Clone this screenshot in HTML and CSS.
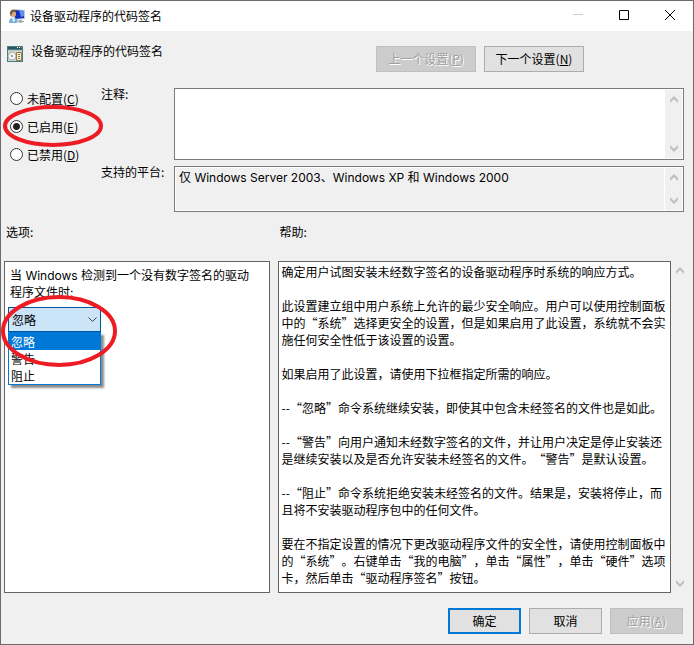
FILE: index.html
```
<!DOCTYPE html>
<html lang="zh-CN">

<head>
	<meta charset="utf-8">
	<title>设备驱动程序的代码签名</title>
	<link rel="stylesheet" href="styles.css">
</head>

<body>
	<svg class="defs" aria-hidden="true">
		<symbol id="up" viewBox="0 0 8 7"><path d="M0 4 4 0 8 4V7L4 3 0 7Z" /></symbol>
		<symbol id="down" viewBox="0 0 8 7"><path d="M0 0 4 4 8 0V3L4 7 0 3Z" /></symbol>
	</svg>

	<div class="window">
		<header class="titlebar">
			<svg class="icon" viewBox="0 0 16 16">
				<path d="M5 1l11 1v9l-11 1z" fill="#c3cad6" />
				<path d="M6 2l9 1v7l-9 1z" fill="#1230b8" />
				<path d="M10 2.500l5 .5v5l-3 1z" fill="#5f8cf0" />
				<path d="M10 12h3v1h2v1l-4 1-2-1z" fill="#a4abb3" />
				<path d="M0 15c0-7 8-7 9-1l-2 1z" fill="#6fb0dc" />
				<path d="M3 9h2l1 4-2 1z" fill="#e8f2f8" />
				<circle cx="4" cy="6" r="3" fill="#dcae7c" />
				<path d="M1 6c-1-5 6-6 6-2L4 4 2 8z" fill="#7a6040" />
			</svg>
			<span class="caption">设备驱动程序的代码签名</span>
			<button class="winbtn" aria-label="最小化" disabled>
				<svg viewBox="0 0 10 10"><path d="M0 4.500h10" stroke="#ccc" /></svg>
			</button>
			<button class="winbtn" aria-label="最大化">
				<svg viewBox="0 0 10 10"><path d="M.5.5h9v9h-9z" fill="none" stroke="#000" /></svg>
			</button>
			<button class="winbtn" aria-label="关闭">
				<svg viewBox="0 0 10 10"><path d="M0 0l10 10M10 0L0 10" stroke="#000" /></svg>
			</button>
		</header>

		<main class="content">
			<div class="heading">
				<svg class="icon" viewBox="0 0 16 16">
					<path d="M0 0h16v16H0z" fill="#457d80" />
					<path d="M1 1h14v2H1z" fill="#2f5560" />
					<path d="M10 1h1v1h-1zM12 1h1v1h-1z" fill="#fff" />
					<path d="M14 1h1v1h-1z" fill="#e06a5a" />
					<path d="M1 4h14v1H1z" fill="#b9c4c4" />
					<path d="M1 5h14v10H1z" fill="#d4d4d0" />
					<circle cx="5" cy="10" r="4" fill="#f4f8f4" stroke="#aaa" />
					<path d="M5 10l-3-2 1-1z" fill="#b6e0b0" />
					<circle cx="5" cy="10" r="1" fill="#888" />
					<path d="M9.500 6.500h5v8h-5z" fill="#f9efb4" stroke="#8a7a58" />
					<path d="M11 8.500h2M11 10.500h2M11 12.500h2" stroke="#777" />
				</svg>
				<h1>设备驱动程序的代码签名</h1>
				<div class="nav">
					<button class="btn" disabled>上一个设置(<u>P</u>)</button>
					<button class="btn">下一个设置(<u>N</u>)</button>
				</div>
			</div>

			<div class="settings">
				<div class="states">
					<label><input type="radio" name="state">未配置(<u>C</u>)</label>
					<label><input type="radio" name="state" checked>已启用(<u>E</u>)</label>
					<label><input type="radio" name="state">已禁用(<u>D</u>)</label>
					<svg class="mark mark-state" viewBox="0 0 100 44"><ellipse cx="50" cy="22" rx="48" ry="19" /></svg>
				</div>
				<label class="fieldname" for="comment">注释:</label>
				<div class="field comment">
					<textarea id="comment"></textarea>
					<div class="scroll"><svg><use href="#up" /></svg><svg><use href="#down" /></svg></div>
				</div>
				<label class="fieldname" for="platform">支持的平台:</label>
				<div class="field platform">
					<textarea id="platform" readonly>仅 Windows Server 2003、Windows XP 和 Windows 2000</textarea>
					<div class="scroll"><svg><use href="#up" /></svg><svg><use href="#down" /></svg></div>
				</div>
			</div>

			<div class="panels">
				<h2>选项:</h2>
				<h2>帮助:</h2>
				<section class="panel options">
					<label for="action">当 Windows 检测到一个没有数字签名的驱动程序文件时:</label>
					<div class="combo">
						<select id="action">
							<option>忽略</option>
							<option>警告</option>
							<option>阻止</option>
						</select>
						<svg class="arrow" viewBox="0 0 9 5"><path d="M.5.5l4 4 4-4" /></svg>
						<ul class="list">
							<li class="selected">忽略</li>
							<li>警告</li>
							<li>阻止</li>
						</ul>
						<svg class="mark mark-combo" viewBox="0 0 118 74"><ellipse cx="59" cy="37" rx="56" ry="34" /></svg>
					</div>
				</section>
				<div class="help">
					<section class="panel">
						<p>确定用户试图安装未经数字签名的设备驱动程序时系统的响应方式。</p>
						<p>此设置建立组中用户系统上允许的最少安全响应。用户可以使用控制面板中的“系统”选择更安全的设置，但是如果启用了此设置，系统就不会实施任何安全性低于该设置的设置。</p>
						<p>如果启用了此设置，请使用下拉框指定所需的响应。</p>
						<p>--“忽略”命令系统继续安装，即使其中包含未经签名的文件也是如此。</p>
						<p>--“警告”向用户通知未经数字签名的文件，并让用户决定是停止安装还是继续安装以及是否允许安装未经签名的文件。“警告”是默认设置。</p>
						<p>--“阻止”命令系统拒绝安装未经签名的文件。结果是，安装将停止，而且将不安装驱动程序包中的任何文件。</p>
						<p>要在不指定设置的情况下更改驱动程序文件的安全性，请使用控制面板中的“系统”。右键单击“我的电脑”，单击“属性”，单击“硬件”选项卡，然后单击“驱动程序签名”按钮。</p>
					</section>
					<div class="scroll"><svg><use href="#up" /></svg><svg><use href="#down" /></svg></div>
				</div>
			</div>

			<footer class="actions">
				<button class="btn default">确定</button>
				<button class="btn">取消</button>
				<button class="btn" disabled>应用(<u>A</u>)</button>
			</footer>
		</main>
	</div>
</body>

</html>
```
FILE: styles.css
```
* {
	box-sizing: border-box;
}

body {
	margin: 0;
	background: #f0f0f0;
	color: #000;
}

body,
button,
select,
textarea {
	font: 12px/17px "Noto Sans CJK SC", sans-serif;
	text-spacing-trim: space-all;
}

h1,
h2,
p,
ul {
	margin: 0;
	padding: 0;
	font-size: 12px;
	font-weight: normal;
}

u {
	text-underline-offset: 1px;
}

.defs {
	display: none;
}

.window {
	display: flex;
	flex-direction: column;
	min-height: 100vh;
	border: 1px solid #6b6b6b;
}

.icon {
	width: 16px;
	height: 16px;
	flex: none;
}

/* title bar */
.titlebar {
	display: flex;
	align-items: center;
	height: 30px;
	padding-left: 8px;
	background: #fff;
}

.caption {
	flex: 1;
	padding: 0 0 2px 5px;
}

.winbtn {
	width: 46px;
	height: 30px;
	padding: 0 0 2px;
	border: 0;
	background: none;
}

.winbtn svg {
	display: block;
	width: 10px;
	height: 10px;
	margin: auto;
}

/* buttons */
.btn {
	height: 26px;
	padding: 0 0 2px;
	border: 1px solid #adadad;
	background: #e1e1e1;
	color: #000;
}

.btn.default {
	border: 2px solid #0078d7;
}

.btn:disabled {
	border-color: #bfbfbf;
	background: #ccc;
	color: #a0a0a0;
	text-shadow: 1px 1px #fff;
}

.content {
	display: flex;
	flex: 1;
	flex-direction: column;
}

.heading {
	display: flex;
	padding: 15px 109px 0 6px;
}

.heading h1 {
	flex: 1;
	padding-left: 8px;
	line-height: 10px;
}

.nav {
	display: flex;
	gap: 8px;
}

.nav .btn {
	width: 100px;
}

/* radio buttons and text fields */
.settings {
	display: grid;
	grid-template-columns: 92px 73px 1fr;
	row-gap: 6px;
	padding: 16px 9px 0 8px;
}

.states {
	position: relative;
	grid-row: span 2;
}

.states label {
	display: flex;
	align-items: center;
	height: 28px;
}

.states label:first-child {
	height: 20px;
	margin-bottom: 4px;
}

.states input {
	width: 13px;
	height: 13px;
	margin: 0 4px 0 1px;
	border: 1px solid #333;
	border-radius: 50%;
	background: #fff;
	appearance: none;
}

.states input:checked {
	background: radial-gradient(circle, #222 3px, #fff 4px);
}

.fieldname {
	line-height: 12px;
}

.field {
	display: flex;
	padding: 1px;
	border: 1px solid #7a7a7a;
	background: #fff;
}

.field textarea {
	flex: 1;
	padding: 1px 3px;
	border: 0;
	outline: 0;
	resize: none;
	overflow: hidden;
	background: #fff;
}

.field textarea,
.options label {
	font-family: Inter, "Noto Sans CJK SC", sans-serif;
}

.comment {
	height: 72px;
}

.platform {
	height: 46px;
}

.platform textarea {
	margin-right: 1px;
	background: #f0f0f0;
}

.scroll {
	display: flex;
	flex-direction: column;
	justify-content: space-between;
	align-items: center;
	width: 17px;
	padding: 6px 0;
	background: #f0f0f0;
}

.scroll svg {
	width: 8px;
	height: 7px;
	fill: #bfbfbf;
}

/* options and help */
.panels {
	display: grid;
	flex: 1;
	grid-template-columns: 266fr 412fr;
	grid-template-rows: auto 1fr;
	column-gap: 8px;
	padding: 11px 4px 0 3px;
}

.panels h2 {
	padding: 0 2px 21px;
}

.panel {
	border: 1px solid #646464;
	background: #fff;
}

.options {
	padding: 5px 3px;
}

.options label {
	display: block;
	padding: 0 8px 0 2px;
}

.combo {
	position: relative;
	width: 93px;
	margin-top: 6px;
}

.combo select {
	display: block;
	width: 100%;
	height: 25px;
	padding: 0 3px;
	border: 1px solid #005499;
	border-radius: 0;
	background: #cce4f7;
	color: #000;
	appearance: none;
}

.arrow {
	position: absolute;
	top: 10px;
	right: 4px;
	width: 9px;
	height: 5px;
	fill: none;
	stroke: #444;
}

.list {
	position: absolute;
	top: 25px;
	left: 0;
	width: 100%;
	border: 1px solid #0078d7;
	background: #fff;
	box-shadow: 3px 3px 2px rgba(0, 0, 0, 0.45);
	list-style: none;
}

.list li {
	padding: 0 2px;
}

.list .selected {
	background: #0078d7;
	color: #fff;
}

.help {
	display: flex;
}

.help .panel {
	flex: 1;
	padding: 1px 3px;
}

.help .scroll {
	width: 18px;
}

.help p {
	margin-bottom: 17px;
}

.help p:last-child {
	margin-bottom: 0;
}

/* red rings */
.mark {
	position: absolute;
	fill: none;
	stroke: #ed1c24;
	stroke-width: 4px;
	pointer-events: none;
}

.mark-state {
	top: 16px;
	left: -6px;
	width: 100px;
	height: 44px;
}

.mark-combo {
	top: -13px;
	left: -8px;
	width: 118px;
	height: 74px;
}

.actions {
	display: flex;
	justify-content: flex-end;
	gap: 8px;
	padding: 15px 10px 10px;
}

.actions .btn {
	width: 73px;
}
```
